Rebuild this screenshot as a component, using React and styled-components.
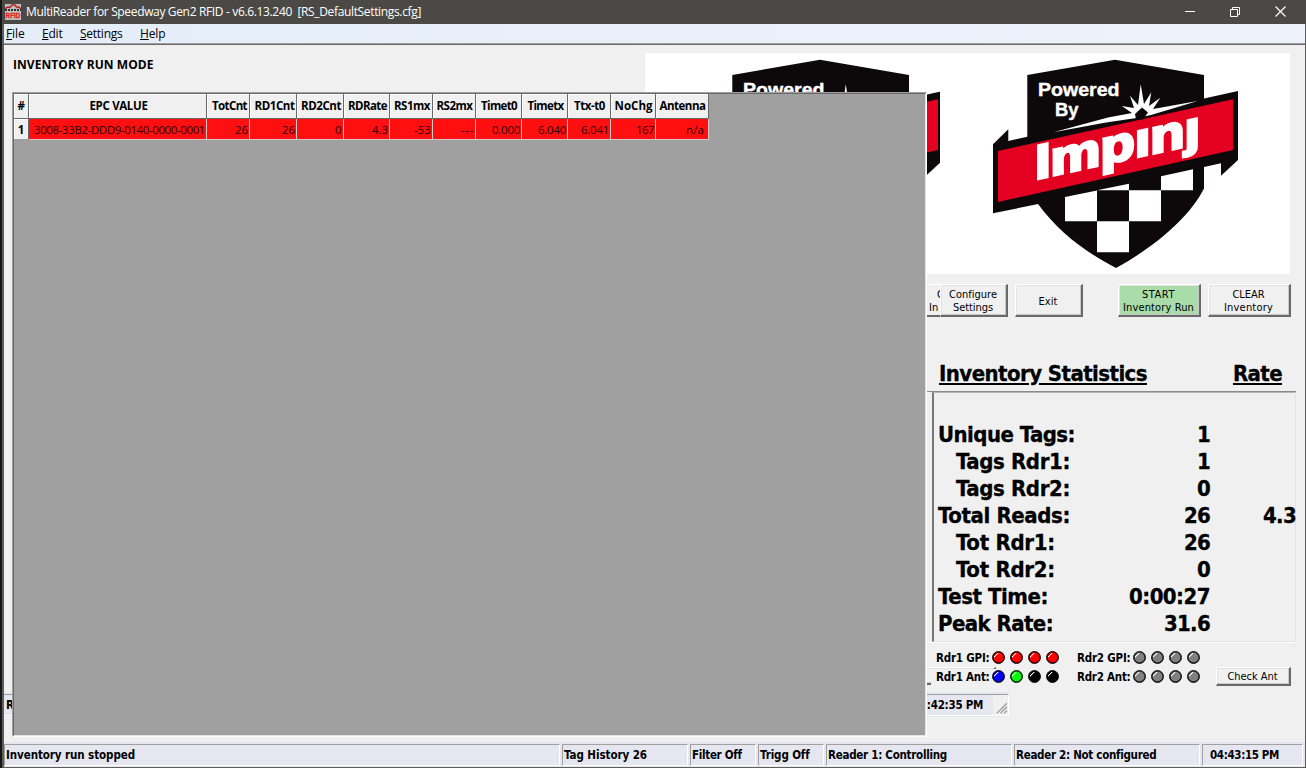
import React, { useLayoutEffect, useRef } from "react";
import styled, { createGlobalStyle, css } from "styled-components";

const tahoma = `"DejaVu Sans Condensed", "DejaVu Sans", sans-serif`;
const segoe = `"Open Sans", "Noto Sans", sans-serif`;

const GlobalStyle = createGlobalStyle`
  * { box-sizing: border-box; }
  html, body { margin: 0; padding: 0; overflow: hidden; background: #161616; }
`;

const sunken = css`
  border: 1px solid;
  border-color: #a0a0a0 #fff #fff #a0a0a0;
`;

const Window = styled.div`
  width: 1306px;
  height: 768px;
  padding-left: 2px;
  display: flex;
  flex-direction: column;
  background: #161616;
  color: #000;
  font: 11px ${tahoma};
`;

const TitleBar = styled.header`
  height: 24px;
  flex: none;
  display: flex;
  align-items: center;
  background: #4b4946;
  color: #fff;
  padding-left: 3px;
  font: 12px ${segoe};
`;

const WindowTitle = styled.div`
  margin-left: 5px;
  padding-bottom: 2px;
  flex: 1;
`;

const WindowControls = styled.div`
  display: flex;
  gap: 35px;
  margin: 0 20px 2px 0;
`;

const Frame = styled.div`
  flex: 1;
  display: flex;
  flex-direction: column;
  border: solid #5f5d5b;
  border-width: 0 1px 1px 2px;
  background: #f0f0f0;
  overflow: hidden;
`;

const MenuBar = styled.nav`
  height: 19px;
  flex: none;
  display: flex;
  align-items: center;
  padding: 0 0 0 2px;
  background: linear-gradient(90deg, #e4edf8, #eef3fb);
  font: 12px ${segoe};
`;

const MenuItem = styled.span`
  width: ${(p) => p.$width}px;
  line-height: 17px;
  u { text-underline-offset: 1px; }
`;

const Client = styled.main`
  position: relative;
  flex: 1;
  display: flex;
  flex-direction: column;
  border-top: 1px solid #a0a0a0;
  box-shadow: inset 0 1px #696969;
`;

const TopRow = styled.div`
  display: flex;
  justify-content: space-between;
  padding: 9px 15px 0 9px;
  height: 230px;
  flex: none;
`;

const ModeTitle = styled.h1`
  margin: 5px 0 0;
  font: bold 12px/14px ${segoe};
`;

const LogoStrip = styled.div`
  display: flex;
  width: 645px;
  height: 221px;
  background: #fff;
  svg { display: block; flex: none; background: #fff; }
  svg + svg { margin-left: -55px; }
`;

const ButtonRow = styled.div`
  display: flex;
  margin: 10px 0 0 909px;
  height: 33px;
  flex: none;
`;

const PushButton = styled.button`
  width: ${(p) => p.$width}px;
  height: ${(p) => p.$height || 33}px;
  margin: 0 ${(p) => p.$after || 0}px 0 0;
  padding: ${(p) => (p.$height ? 0 : 2)}px 1px 0 0;
  flex: none;
  display: flex;
  flex-direction: column;
  align-items: center;
  justify-content: center;
  border: solid;
  border-width: 1px 2px 2px 1px;
  border-color: #fff #696969 #696969 #fff;
  box-shadow: inset -1px -1px #c8c8c8, inset 1px 1px #e3e3e3;
  background: ${(p) => p.$color || "#f0f0f0"};
  color: #000;
  font: 11px/13px ${tahoma};
  white-space: nowrap;
`;

const CoveredButton = styled.div`
  width: 27px;
  height: 33px;
  flex: none;
  overflow: hidden;
  padding: 3px 0 0 16px;
  border: solid;
  border-width: 1px 0 2px;
  border-color: #fff #696969 #696969;
  font: 11px/13px ${tahoma};
`;

const CoveredLine = styled.div`
  padding-left: ${(p) => p.$indent || 0}px;
`;

const StatHeadings = styled.div`
  display: flex;
  justify-content: space-between;
  margin: 44px 23px 0 935px;
  height: 30px;
  flex: none;
  font: bold 22px/26px ${tahoma};
  -webkit-text-stroke: 0.3px #000;
  text-decoration: underline;
  text-decoration-thickness: 2px;
  text-underline-offset: 2px;
`;

const StatPanel = styled.section`
  height: 252px;
  flex: none;
  margin: 0 9px 0 908px;
  padding-left: 20px;
  border: solid;
  border-width: 1px 0;
  border-color: #8a8a8a #fff #fff;
`;

const StatFrame = styled.div`
  height: 250px;
  border: solid;
  border-width: 1px 1px 1px 2px;
  border-color: #b4b4b4 #e3e3e3 #e3e3e3 #777;
  padding: 28px 0 0 4px;
`;

const StatRow = styled.div`
  display: grid;
  grid-template-columns: 136px 136px 86px;
  height: 27px;
  font: bold 22px/27px ${tahoma};
  -webkit-text-stroke: 0.3px #000;
  white-space: nowrap;
`;

const StatLabel = styled.span`
  padding-left: ${(p) => (p.$indent ? 18 : 0)}px;
`;

const StatValue = styled.span`
  text-align: right;
`;

const ReaderStrip = styled.div`
  display: flex;
  height: 49px;
  flex: none;
  padding: 5px 0 0 917px;
`;

const HiddenButtonSlot = styled.div`
  width: 75px;
  margin: 19px -71px 0 0;
`;

const LedGroup = styled.div`
  position: relative;
  width: 141px;
  padding-left: 6px;
  height: 38px;
`;

const LedRow = styled.div`
  display: flex;
  align-items: center;
  height: 19px;
`;

const LedName = styled.span`
  width: 66px;
  margin-right: -5px;
  padding-left: 5px;
  font: bold 11.5px/16px ${tahoma};
  background: #f0f0f0;
  white-space: nowrap;
`;

const Led = styled.i`
  width: 13px;
  height: 13px;
  margin-right: 5px;
  border: 1px solid #111;
  border-radius: 50%;
  box-shadow: inset 0 0 0 0.5px #000;
  background:
    linear-gradient(135deg, transparent 27%, #fff 28%, #fff 35%, transparent 36%) 1px 1px / 7px 7px no-repeat,
    ${(p) => p.$color};
`;

const CheckSlot = styled.div`
  margin: 19px 0 0 9px;
`;

const OldStatus = styled.div`
  display: flex;
  width: 1005px;
  height: 25px;
  flex: none;
  padding-top: 2px;
  background: #e6e6f0;
`;

const OldStatusText = styled.div`
  width: ${(p) => p.$width}px;
  height: 22px;
  border-top: 1px solid #a0a0a0;
  border-bottom: 1px solid #fff;
  padding: 0 ${(p) => (p.$end ? 10 : 0)}px 0 2px;
  text-align: ${(p) => (p.$end ? "right" : "left")};
  font: bold 11.5px/20px ${tahoma};
`;

const Grip = styled.svg`
  width: 16px;
  height: 22px;
  background: #f0f0f0;
  border: solid;
  border-width: 1px 1px 1px 0;
  border-color: #a0a0a0 #fff #fff;
`;

const StatusBar = styled.footer`
  display: flex;
  gap: 2px;
  height: 25px;
  flex: none;
  padding: 2px 2px 1px 0;
  background: #e6e6f0;
`;

const StatusCell = styled.div`
  ${sunken}
  width: ${(p) => p.$width}px;
  height: 22px;
  padding-left: ${(p) => p.$pad || 1}px;
  font: bold 11.5px/21px ${tahoma};
  white-space: nowrap;
`;

const GridPanel = styled.section`
  position: absolute;
  left: 8px;
  top: 48px;
  width: 915px;
  height: 645px;
  background: #a0a0a0;
  border: 1px solid;
  border-color: #a0a0a0 #fff #fff #a0a0a0;
`;

const GridInner = styled.div`
  width: 913px;
  height: 643px;
  border: 1px solid;
  border-color: #696969 #e3e3e3 #e3e3e3 #696969;
`;

const GridRow = styled.div`
  display: grid;
  grid-template-columns: 15px 178px 43px 47px 47px 46px 43px 43px 46px 46px 43px 45px 53px;
  width: 695px;
`;

const HeadCell = styled.div`
  height: ${(p) => p.$height || 25}px;
  display: flex;
  align-items: center;
  justify-content: center;
  background: #f0f0f0;
  border-right: 1px solid #696969;
  border-bottom: 1px solid ${(p) => (p.$height ? "#a0a0a0" : "#696969")};
  box-shadow: inset 1px 1px #fff;
  font: bold 11.5px ${segoe};
  padding: 0 0 ${(p) => (p.$height ? 0 : 2)}px ${(p) => p.$shift || 0}px;
  white-space: nowrap;
`;

const DataCell = styled.div`
  height: 21px;
  background: #ff0f0f;
  color: #2a0000;
  border-right: 1px solid #d0c8c8;
  border-bottom: 1px solid #d0c8c8;
  padding-right: ${(p) => p.$inset || 1}px;
  text-align: right;
  font: 11.5px/22px ${segoe};
  white-space: nowrap;
`;

const TextRun = styled.span`
  display: inline-block;
  white-space: pre;
`;

/* Spreads the letters of a label evenly so that it takes the given width. */
function Run({ w, children }) {
  const ref = useRef(null);
  useLayoutEffect(() => {
    const el = ref.current;
    el.style.letterSpacing = "0px";
    const n = el.textContent.length;
    const gap = (w - el.getBoundingClientRect().width) / n;
    el.style.letterSpacing = `${gap}px`;
  }, [w, children]);
  return <TextRun ref={ref}>{children}</TextRun>;
}

function AppIcon() {
  return (
    <svg width="16" height="16" viewBox="0 0 16 16">
      <rect width="16" height="16" fill="#bdbdbd" />
      <path d="M0 4.500l3-1.500 2 .5 2-2.500h3l2 2.500 2-.5 2 2" stroke="#b22" strokeWidth="1.4" fill="none" />
      <path d="M0 6h16" stroke="#333" strokeWidth="2" strokeDasharray="2 1" />
      <text x="0.5" y="14.3" fontFamily="Liberation Sans" fontWeight="bold" fontSize="7.5" textLength="15" lengthAdjust="spacingAndGlyphs" fill="#f01818" stroke="#f01818" strokeWidth=".3">RFID</text>
    </svg>
  );
}

function ImpinjLogo() {
  return (
    <svg width="350" height="221" viewBox="0 0 350 221">
      <path fill="#0d090a" d="M87.3 22L175 6.7 264 22V45.5L298 38V107L281 122.7V110.3L264 114V135.5C250 163 218 192 176 215C142 197 119 179 98 151L53 160.3V91.3L68.3 76.3V88L87.3 83.7Z" />
      <path fill="#e30021" d="M58 98L293 46.3V97L58 149Z" />
      <path fill="#fff" d="M125 144L157 137.5V168.3H125ZM157 137.3L189 130.7V137.3H221V168.3H189V137.3ZM221 123.3L253 116.3V137.3H221ZM157 168.3H189V199.3H157Z" />
      <path fill="#fff" d="M113.3 79.3L168 64.5 192 60 181.7 53 194 55 190 42.7 198 52 200.7 31.3 204 51 211.3 39.3 209 53 220.3 44.7 213 56 257.7 48 211 62 200 64.500 166 69.500Z" />
      <path fill="#0d090a" d="M202 54.500L208 59.5 203 66.500 196 66.500 195 61Z" />
      <g fill="#fff" fontFamily="'Liberation Sans', sans-serif" fontWeight="bold">
        <text x="98" y="42.7" fontSize="18.5" textLength="81.5" lengthAdjust="spacingAndGlyphs" stroke="#fff" strokeWidth=".4">Powered</text>
        <text x="115" y="62.5" fontSize="18.5" textLength="23.5" lengthAdjust="spacingAndGlyphs" stroke="#fff" strokeWidth=".4">By</text>
        <text transform="translate(95 126.500) skewY(-12.4)" fontSize="48" textLength="165" lengthAdjust="spacingAndGlyphs" stroke="#fff" strokeWidth="3">Impınȷ</text>
      </g>
    </svg>
  );
}

const columns = [
  ["#", 7], ["EPC VALUE", 58, 2], ["TotCnt", 35, 3], ["RD1Cnt", 40, 3], ["RD2Cnt", 40, 2], ["RDRate", 39, 2],
  ["RS1mx", 36, 2], ["RS2mx", 36, 1], ["Timet0", 36, 1], ["Timetx", 36, 2], ["Ttx-t0", 31, 1], ["NoChg", 38, 1], ["Antenna", 46, 1],
];

const tagRow = [
  ["3008-33B2-DDD9-0140-0000-0001", 171], ["26", 13], ["26", 13], ["0", 7], ["4.3", 16], ["-53", 17],
  ["---", 13], ["0.000", 28], ["6.040", 28], ["6.041", 28], ["167", 18], ["n/a", 18],
];

const stats = [
  ["Unique Tags:", 137, "1", 13],
  ["Tags Rdr1:", 114, "1", 13, true],
  ["Tags Rdr2:", 114, "0", 13, true],
  ["Total Reads:", 132, "26", 26, false, "4.3"],
  ["Tot Rdr1:", 99, "26", 26, true],
  ["Tot Rdr2:", 99, "0", 13, true],
  ["Test Time:", 110, "0:00:27", 81],
  ["Peak Rate:", 115, "31.6", 46],
];

const statusCells = [
  ["Inventory run stopped", 129, 556],
  ["Tag History 26", 83, 126],
  ["Filter Off", 49, 66],
  ["Trigg Off", 49, 66],
  ["Reader 1: Controlling", 119, 186],
  ["Reader 2: Not configured", 140, 186],
  ["04:43:15 PM", 69, 101, 7],
];

const gray = "#808080";

function Leds({ name, colors }) {
  return (
    <LedRow>
      <LedName><Run w={53.5}>{name}</Run></LedName>
      {colors.map((c, i) => <Led key={i} $color={c} />)}
    </LedRow>
  );
}

export default function App() {
  return (
    <Window>
      <GlobalStyle />
      <TitleBar>
        <AppIcon />
        <WindowTitle><Run w={395}>{"MultiReader for Speedway Gen2 RFID - v6.6.13.240  [RS_DefaultSettings.cfg]"}</Run></WindowTitle>
        <WindowControls>
          <svg width="10" height="11" stroke="#fff"><path d="M0 5.5h10" /></svg>
          <svg width="10" height="11" stroke="#fff" fill="none"><path d="M.5 3.5h7v7h-7zM2.5 3V1.5h7v7H8" /></svg>
          <svg width="11" height="11" stroke="#fff" strokeWidth="1.2"><path d="M.5 .5l10 10M10.500 .5l-10 10" /></svg>
        </WindowControls>
      </TitleBar>
      <Frame>
        <MenuBar>
          <MenuItem $width={36}><Run w={18.5}><u>F</u>ile</Run></MenuItem>
          <MenuItem $width={38}><Run w={20.5}><u>E</u>dit</Run></MenuItem>
          <MenuItem $width={60}><Run w={42.5}><u>S</u>ettings</Run></MenuItem>
          <MenuItem $width={40}><Run w={25.5}><u>H</u>elp</Run></MenuItem>
        </MenuBar>
        <Client>
          <TopRow>
            <ModeTitle><Run w={140.5}>INVENTORY RUN MODE</Run></ModeTitle>
            <LogoStrip><ImpinjLogo /><ImpinjLogo /></LogoStrip>
          </TopRow>
          <ButtonRow>
            <CoveredButton>
              <CoveredLine $indent={8}>C</CoveredLine>
              <CoveredLine>In</CoveredLine>
            </CoveredButton>
            <PushButton $width={68} $after={7}><Run w={48}>Configure</Run><Run w={40}>Settings</Run></PushButton>
            <PushButton $width={68} $after={35}><Run w={19}>Exit</Run></PushButton>
            <PushButton $width={83} $after={7} $color="#a8dca8"><Run w={33}>START</Run><Run w={71}>Inventory Run</Run></PushButton>
            <PushButton $width={83}><Run w={32}>CLEAR</Run><Run w={49}>Inventory</Run></PushButton>
          </ButtonRow>
          <StatHeadings><Run w={208}>Inventory Statistics</Run><Run w={49}>Rate</Run></StatHeadings>
          <StatPanel>
            <StatFrame>
              {stats.map(([label, lw, value, vw, indent, rate]) => (
                <StatRow key={label}>
                  <StatLabel $indent={indent}><Run w={lw}>{label}</Run></StatLabel>
                  <StatValue><Run w={vw}>{value}</Run></StatValue>
                  {rate && <StatValue><Run w={33}>{rate}</Run></StatValue>}
                </StatRow>
              ))}
            </StatFrame>
          </StatPanel>
          <ReaderStrip>
            <HiddenButtonSlot><PushButton $width={75} $height={18} /></HiddenButtonSlot>
            <LedGroup>
              <Leds name="Rdr1 GPI:" colors={["#f00", "#f00", "#f00", "#f00"]} />
              <Leds name="Rdr1 Ant:" colors={["#00f", "#0f0", "#000", "#000"]} />
            </LedGroup>
            <LedGroup>
              <Leds name="Rdr2 GPI:" colors={[gray, gray, gray, gray]} />
              <Leds name="Rdr2 Ant:" colors={[gray, gray, gray, gray]} />
            </LedGroup>
            <CheckSlot><PushButton $width={75} $height={19}><Run w={50}>Check Ant</Run></PushButton></CheckSlot>
          </ReaderStrip>
          <OldStatus>
            <OldStatusText $width={200}>R</OldStatusText>
            <OldStatusText $width={789} $end><Run w={70}>04:42:35 PM</Run></OldStatusText>
            <Grip viewBox="0 0 16 22"><path d="M4 20L15 9M8 20l7-7M12 20l3-3" stroke="#a0a0a0" strokeWidth="1.5" /></Grip>
          </OldStatus>
          <GridPanel>
            <GridInner>
              <GridRow>
                {columns.map(([name, w, shift]) => (
                  <HeadCell key={name} $shift={shift}><Run w={w}>{name}</Run></HeadCell>
                ))}
              </GridRow>
              <GridRow>
                <HeadCell $height={21}>1</HeadCell>
                {tagRow.map(([value, w], i) => (
                  <DataCell key={i} $inset={i === 11 ? 4 : 1}><Run w={w}>{value}</Run></DataCell>
                ))}
              </GridRow>
            </GridInner>
          </GridPanel>
        </Client>
        <StatusBar>
          {statusCells.map(([text, w, width, pad]) => (
            <StatusCell key={text} $width={width} $pad={pad}><Run w={w}>{text}</Run></StatusCell>
          ))}
        </StatusBar>
      </Frame>
    </Window>
  );
}
